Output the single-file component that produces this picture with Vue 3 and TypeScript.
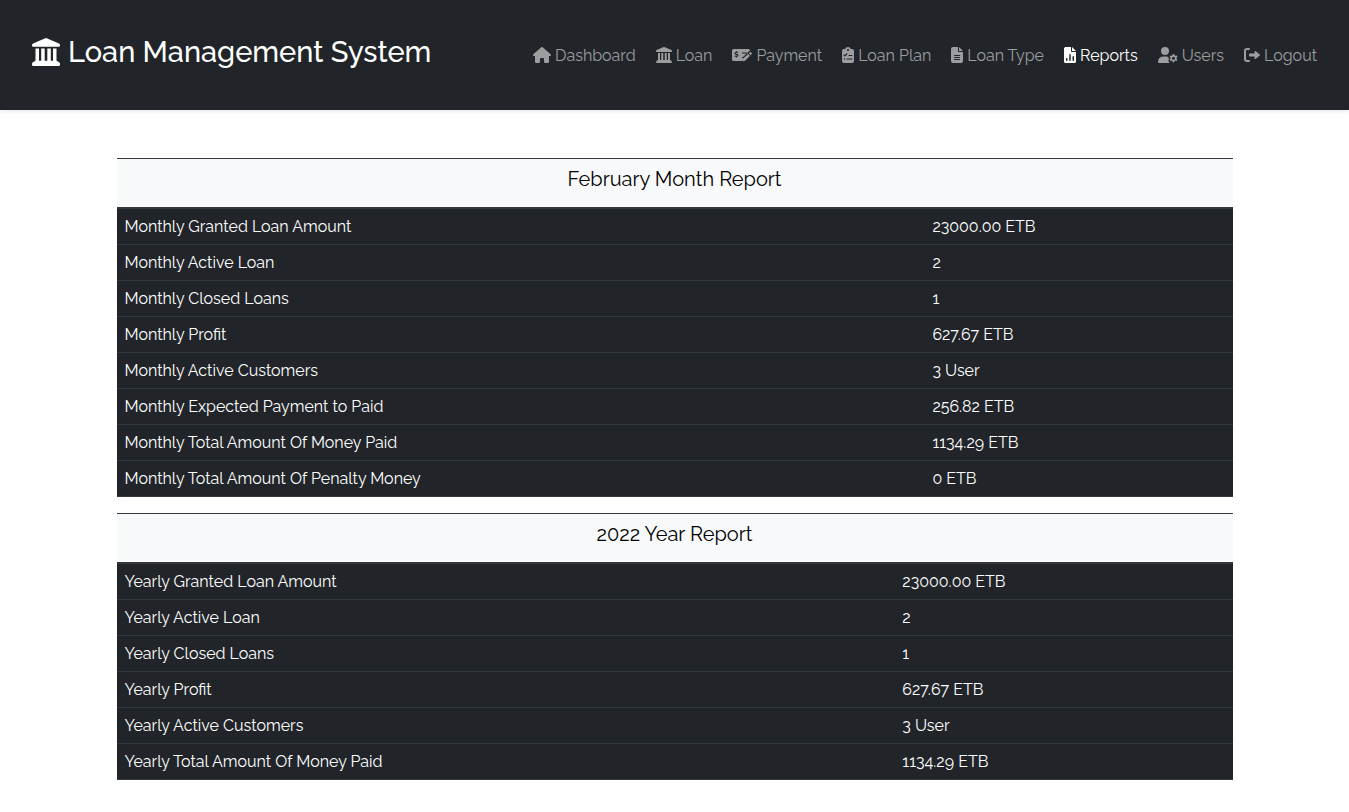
<script setup lang="ts">
interface NavItem { label: string; width: number; icon: string; active?: boolean }
interface Report { title: string; rows: [string, string][] }

const columns = 'M243 3q13-6 26 0l224 96q19 9 19 29v8q0 24-24 24H24q-24 0-24-24v-8q0-20 19-29zM64 192h64v224h40V192h64v224h48V192h64v224h40V192h64v224q14 4 24 12l24 16q16 12 16 32v12q0 24-24 24H24q-24 0-24-24v-12q0-20 16-32l24-16q10-8 24-12z'

const nav: NavItem[] = [
  { label: 'Dashboard', width: 576, icon: 'M575.8 255.5c0 18-15 32.1-32 32.1h-32l.7 160.2c0 2.7-.2 5.4-.5 8.1V472c0 22.1-17.9 40-40 40H392c-22.1 0-40-17.9-40-40v-88c0-17.7-14.3-32-32-32h-64c-17.7 0-32 14.3-32 32v88c0 22.1-17.9 40-40 40h-80c-22.1 0-40-17.9-40-40V287.6H32c-18 0-32-14-32-32.1 0-9 3-17 10-24L266.4 8c7-7 15-8 22-8s15 2 21 7l255.4 224.5c8 7 12 15 11 24z' },
  { label: 'Loan', width: 512, icon: columns },
  { label: 'Payment', width: 640, icon: 'M48 64h480q48 0 48 48v10q-24 0-42 18L372 302q-8 8-11 18h-41v32h34l-10 42q-8 34 8 54H48q-48 0-48-48V112q0-48 48-48zm80 72v18c-29 5-48 22-48 47 0 34 29 43 56 51 25 8 35 11 35 20 0 11-43 17-82-2l-10 30q24 11 49 14v20h32v-20c29-5 48-22 48-48 0-34-29-43-58-52-23-7-33-11-33-18 0-13 38-15 72-3l9-30q-15-6-38-9v-18zm192 40v32h192v-32zm249-5q20-20 41 0l18 18q20 21 0 41l-31 31-59-59zM516 224l59 59-147 147q-7 7-18 10l-61 15q-16 2-13-13l15-61q3-11 11-18z' },
  { label: 'Loan Plan', width: 384, icon: 'M192 0c-42 0-77 27-90 64H64q-64 0-64 64v320q0 64 64 64h256q64 0 64-64V128q0-64-64-64h-38c-13-37-48-64-90-64zm0 64a32 32 0 110 64 32 32 0 010-64zM168 204q14 11 3 24l-64 71q-12 12-24 2l-36-35q-12-12 0-24t24 0l18 18 53-60q12-9 26 4zM224 256h96q16 0 16 16t-16 16h-96q-16 0-16-16t16-16zM160 368h160q16 0 16 16t-16 16H160q-16 0-16-16t16-16zM80 360a24 24 0 110 48 24 24 0 010-48z' },
  { label: 'Loan Type', width: 384, icon: 'M64 0h160v128q0 32 32 32h128v288q0 64-64 64H64q-64 0-64-64V64Q0 0 64 0zm192 0l128 128H256zM112 256q-16 0-16 16t16 16h160q16 0 16-16t-16-16zm0 64q-16 0-16 16t16 16h160q16 0 16-16t-16-16zm0 64q-16 0-16 16t16 16h160q16 0 16-16t-16-16z' },
  { label: 'Reports', width: 384, active: true, icon: 'M48 0h176v128q0 32 32 32h128v304q0 48-48 48H48q-48 0-48-48V48Q0 0 48 0zm208 0l128 128H256zM64 376v48q0 24 24 24t24-24v-48q0-24-24-24t-24 24zm104-128v176q0 24 24 24t24-24V248q0-24-24-24t-24 24zm104 64v112q0 24 24 24t24-24V312q0-24-24-24t-24 24z' },
  { label: 'Users', width: 640, icon: 'M224 0a128 128 0 110 256 128 128 0 010-256zM178 304h92q36 0 68 14-14 24 1 46l13 12q-2 13 0 24l-13 12c-15 17-2 59 29 92l14 8H30q-30 0-30-30 0-178 178-178zM469 228q27-8 54 0l7 37 27 16 36-12q20 21 28 48l-29 25v32l29 25q-9 28-28 48l-36-12-27 16-7 37q-27 8-54 0l-7-37-27-16-36 12q-20-21-28-48l29-25v-32l-29-25q9-28 28-48l36 12 27-16zm27 82a48 48 0 100 96 48 48 0 000-96z' },
  { label: 'Logout', width: 512, icon: 'M96 32h64q32 0 32 32t-32 32H96q-32 0-32 32v256q0 32 32 32h64q32 0 32 32t-32 32H96q-96 0-96-96V128q0-96 96-96zm281 103l128 103q14 18 0 36L377 377q-25 15-41-13v-60H192q-32 0-32-32v-32q0-32 32-32h144v-60q15-29 41-13z' },
]

const reports: Report[] = [
  {
    title: 'February Month Report',
    rows: [
      ['Monthly Granted Loan Amount', '23000.00 ETB'],
      ['Monthly Active Loan', '2'],
      ['Monthly Closed Loans', '1'],
      ['Monthly Profit', '627.67 ETB'],
      ['Monthly Active Customers', '3 User'],
      ['Monthly Expected Payment to Paid', '256.82 ETB'],
      ['Monthly Total Amount Of Money Paid', '1134.29 ETB'],
      ['Monthly Total Amount Of Penalty Money', '0 ETB'],
    ],
  },
  {
    title: '2022 Year Report',
    rows: [
      ['Yearly Granted Loan Amount', '23000.00 ETB'],
      ['Yearly Active Loan', '2'],
      ['Yearly Closed Loans', '1'],
      ['Yearly Profit', '627.67 ETB'],
      ['Yearly Active Customers', '3 User'],
      ['Yearly Total Amount Of Money Paid', '1134.29 ETB'],
    ],
  },
]
</script>

<template>
  <header class="navbar">
    <a class="brand" href="#">
      <svg class="brand-icon" viewBox="0 0 512 512" aria-hidden="true"><path :d="columns" /></svg>
      <span>Loan Management System</span>
    </a>
    <nav class="links" aria-label="Main">
      <a v-for="item in nav" :key="item.label" href="#" class="link" :class="{ active: item.active }" :aria-current="item.active ? 'page' : undefined">
        <svg class="icon" :viewBox="`0 0 ${item.width} 512`" aria-hidden="true"><path fill-rule="evenodd" :d="item.icon" /></svg>
        <span>{{ item.label }}</span>
      </a>
    </nav>
  </header>
  <main class="content">
    <table v-for="report in reports" :key="report.title" class="report">
      <thead>
        <tr><th colspan="2" scope="colgroup">{{ report.title }}</th></tr>
      </thead>
      <tbody>
        <tr v-for="row in report.rows" :key="row[0]">
          <td>{{ row[0] }}</td>
          <td>{{ row[1] }}</td>
        </tr>
      </tbody>
    </table>
  </main>
</template>

<style>
body {
  margin: 0;
  background: #fff;
  font-family: Raleway, Lato, sans-serif;
  font-size: 16px;
  line-height: 24px;
}
</style>

<style scoped>
.navbar {
  display: flex;
  align-items: center;
  justify-content: space-between;
  box-sizing: border-box;
  min-height: 110px;
  padding: 0 32px;
  background: #212529;
  box-shadow: 0 2px 4px rgba(0, 0, 0, 0.08);
}
.brand {
  display: flex;
  align-items: center;
  gap: 8px;
  padding-bottom: 6px;
  color: #fff;
  font-size: 29px;
  font-weight: 500;
  line-height: 36px;
  text-decoration: none;
  white-space: nowrap;
}
.brand-icon {
  width: 28px;
  height: 28px;
  fill: currentColor;
}
.links {
  display: flex;
  gap: 20px;
  padding-top: 2px;
}
.link {
  display: flex;
  align-items: center;
  gap: 4px;
  color: #9b9d9f;
  text-decoration: none;
  white-space: nowrap;
}
.link.active {
  color: #fff;
}
.icon {
  height: 16px;
  margin-bottom: 2px;
  fill: currentColor;
}
.content {
  max-width: 1116px;
  margin: 48px auto 0;
}
.report {
  width: 100%;
  margin-bottom: 16px;
  border-collapse: collapse;
  color: #fff;
  background: #212529;
}
.report th {
  height: 32px;
  padding: 8px;
  border-top: 1px solid #32383e;
  border-bottom: 2px solid #32383e;
  background: #f8f9fa;
  color: #000;
  font-size: 20px;
  font-weight: 400;
  line-height: 24px;
  vertical-align: top;
}
.report td {
  padding: 6px 8px 5px;
  border-bottom: 1px solid #32383e;
}
</style>
